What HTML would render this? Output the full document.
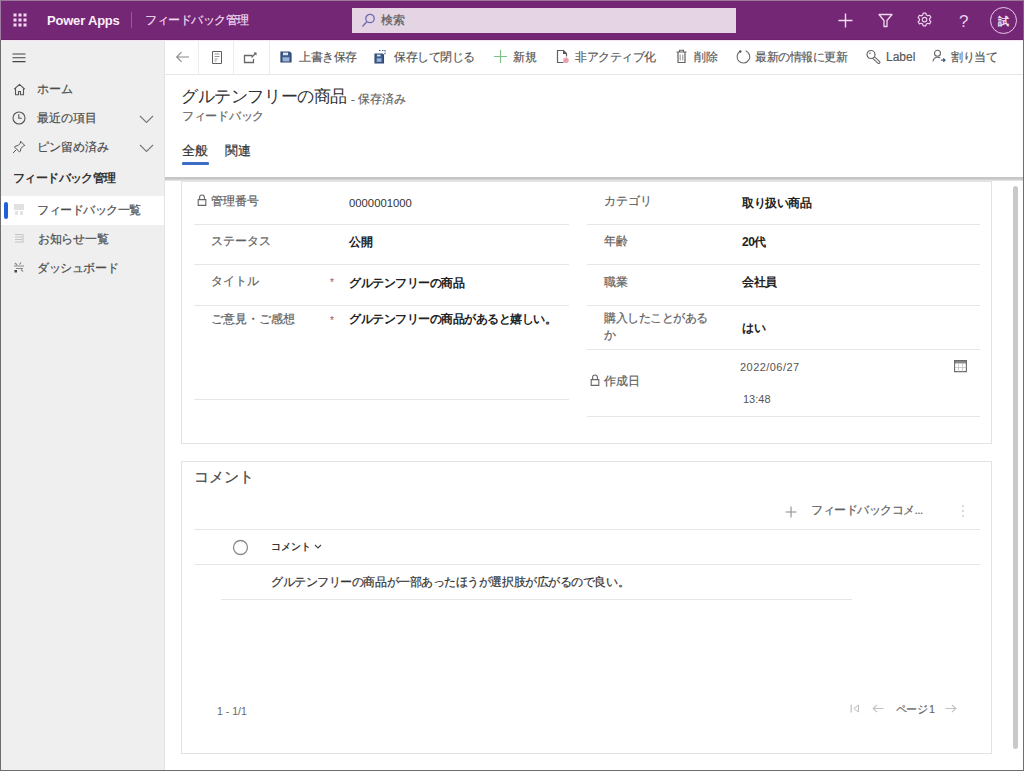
<!DOCTYPE html>
<html><head><meta charset="utf-8">
<style>
*{box-sizing:border-box;margin:0;padding:0}
html,body{width:1024px;height:771px;overflow:hidden;background:#fff}
body{font-family:"Liberation Sans",sans-serif;color:#333;position:relative}
.a{position:absolute;white-space:nowrap;line-height:1}
.sk{-webkit-text-stroke:0.2px currentColor}
#frame{position:absolute;left:0;top:0;width:1024px;height:771px;border:1px solid #6e6e6e;border-top-color:#9a7a9a;z-index:50;pointer-events:none}
#top{position:absolute;left:0;top:0;width:1024px;height:40px;background:#742774}
#nav{position:absolute;left:0;top:40px;width:165px;height:731px;background:#efefef;border-right:1px solid #e3e3e3}
#cmd{position:absolute;left:165px;top:40px;width:859px;height:35px;background:#fff;border-bottom:1px solid #e6e6e6}
#hdr{position:absolute;left:165px;top:75px;width:859px;height:102px;background:#fff}
#shadow{position:absolute;left:165px;top:177px;width:859px;height:4px;background:linear-gradient(#c6c6c6 0,#c6c6c6 2px,#dedede 3px,#e8e8e8 4px)}
#content{position:absolute;left:165px;top:180px;width:859px;height:591px;background:#fff}
.card{position:absolute;background:#fff;border:1px solid #e3e3e3}
.line{position:absolute;height:1px;background:#e6e6e6}
.lbl{color:#606060;font-size:12px;-webkit-text-stroke:0.2px #606060}
.val{color:#222;font-size:12px;font-weight:bold;letter-spacing:-0.5px}
.sep{position:absolute;top:40px;width:1px;height:34px;background:#ececec}
.lbln{font-size:11.6px;color:#4c4c4c;-webkit-text-stroke:0.2px #4c4c4c}
.ct{font-size:12px;color:#555;-webkit-text-stroke:0.15px #555;letter-spacing:-0.45px}
</style></head><body>
<div id="top"></div>
<div id="nav"></div>
<div id="cmd"></div>
<div id="hdr"></div>
<div id="content"></div>
<div id="shadow"></div>

<!-- top bar -->
<svg class="a" style="left:12px;top:12px" width="16" height="16" viewBox="0 0 16 16">
<g fill="#f3d8f3"><rect x="1.5" y="1.5" width="3" height="3"/><rect x="6.5" y="1.5" width="3" height="3"/><rect x="11.5" y="1.5" width="3" height="3"/>
<rect x="1.5" y="6.5" width="3" height="3"/><rect x="6.5" y="6.5" width="3" height="3"/><rect x="11.5" y="6.5" width="3" height="3"/>
<rect x="1.5" y="11.5" width="3" height="3"/><rect x="6.5" y="11.5" width="3" height="3"/><rect x="11.5" y="11.5" width="3" height="3"/></g></svg>
<div class="a" style="left:47px;top:14px;font-size:13px;font-weight:bold;color:#fbeefb;letter-spacing:-0.2px">Power Apps</div>
<div class="a" style="left:131px;top:12px;width:1px;height:16px;background:#9a5a9a"></div>
<div class="a sk" style="left:145px;top:14px;font-size:12px;color:#f1dcf1;letter-spacing:-0.5px">フィードバック管理</div>
<div class="a" style="left:352px;top:8px;width:384px;height:25px;background:#e4d4e4"></div>
<svg class="a" style="left:360px;top:11px" width="16" height="18" viewBox="0 0 16 18"><circle cx="10" cy="7.5" r="4.2" fill="none" stroke="#6b6bb0" stroke-width="1.3"/><line x1="7" y1="10.5" x2="2.5" y2="15.5" stroke="#6b6bb0" stroke-width="1.3"/></svg>
<div class="a sk" style="left:381px;top:14px;font-size:12px;color:#5e5e5e">検索</div>
<!-- right icons -->
<svg class="a" style="left:838px;top:13px" width="15" height="15" viewBox="0 0 15 15"><path d="M7.5 0.5v14M0.5 7.5h14" stroke="#f3e0f3" stroke-width="1.4"/></svg>
<svg class="a" style="left:878px;top:13px" width="15" height="15" viewBox="0 0 15 15"><path d="M1 1.5h13l-5 6v6h-3v-6z" fill="none" stroke="#f0d8f0" stroke-width="1.3" stroke-linejoin="round"/></svg>
<svg class="a" style="left:917px;top:12px" width="15" height="15" viewBox="0 0 15 15"><path d="M6.2 1.2h2.6l.5 1.8 1.5.8 1.8-.6 1.3 2.2-1.3 1.3v1.7l1.3 1.3-1.3 2.2-1.8-.6-1.5.8-.5 1.8H6.2l-.5-1.8-1.5-.8-1.8.6L1.1 9.8l1.3-1.3V6.8L1.1 5.5l1.3-2.2 1.8.6 1.5-.8z" fill="none" stroke="#ecd0ec" stroke-width="1.2" stroke-linejoin="round"/><circle cx="7.5" cy="7.6" r="2.3" fill="none" stroke="#ecd0ec" stroke-width="1.2"/></svg>
<div class="a" style="left:959px;top:13px;font-size:17px;color:#eccfec">?</div>
<div class="a" style="left:990px;top:7px;width:27px;height:27px;border:1.2px solid #ecc8ec;border-radius:50%"></div>
<div class="a" style="left:998px;top:16px;font-size:11px;font-weight:bold;color:#f2e2f2">試</div>

<!-- nav -->
<svg class="a" style="left:12px;top:53px" width="14" height="10" viewBox="0 0 14 10"><path d="M0.5 1h13M0.5 4.8h13M0.5 8.6h13" stroke="#444" stroke-width="1.1"/></svg>
<svg class="a" style="left:13px;top:83px" width="13" height="13" viewBox="0 0 13 13"><path d="M1.2 6.2L6.5 1.3l5.3 4.9M2.5 5v6.8h3v-3.3h2v3.3h3V5" fill="none" stroke="#555" stroke-width="1.1" stroke-linejoin="round"/></svg>
<div class="a lbln" style="left:37px;top:83px">ホーム</div>
<svg class="a" style="left:12px;top:111px" width="14" height="14" viewBox="0 0 14 14"><circle cx="7" cy="7" r="6" fill="none" stroke="#555" stroke-width="1.1"/><path d="M6.8 3.3v4h3" fill="none" stroke="#555" stroke-width="1.1"/></svg>
<div class="a lbln" style="left:37px;top:112px">最近の項目</div>
<svg class="a" style="left:139px;top:115px" width="15" height="9" viewBox="0 0 15 9"><path d="M1 1l6.5 6.5L14 1" fill="none" stroke="#777" stroke-width="1.1"/></svg>
<svg class="a" style="left:12px;top:140px" width="14" height="14" viewBox="0 0 14 14"><path d="M8.5 1.2l4.3 4.3-1.4.6-2.6 2.4-.3 2.6-1 .9-5-5 .9-1 2.6-.3 2.4-2.6zM4.3 9.7L1 13" fill="none" stroke="#555" stroke-width="1" stroke-linejoin="round"/></svg>
<div class="a lbln" style="left:37px;top:141px">ピン留め済み</div>
<svg class="a" style="left:139px;top:144px" width="15" height="9" viewBox="0 0 15 9"><path d="M1 1l6.5 6.5L14 1" fill="none" stroke="#777" stroke-width="1.1"/></svg>
<div class="a" style="left:13px;top:172px;font-size:12px;font-weight:bold;color:#333;letter-spacing:-0.6px">フィードバック管理</div>
<div class="a" style="left:1px;top:196px;width:163px;height:29px;background:#fff"></div>
<div class="a" style="left:4px;top:202px;width:3.5px;height:17px;background:#1d62d6;border-radius:2px"></div>
<svg class="a" style="left:14px;top:204px" width="11" height="11" viewBox="0 0 11 11"><path d="M0 1h10M0 3h10M0 5h10" stroke="#c4c4c4" stroke-width="1.2"/><path d="M1 8h3M6 8h3M1 10h3M6 10h3" stroke="#c8c8c8" stroke-width="1.1"/></svg>
<div class="a lbln" style="left:37px;top:204px;letter-spacing:-0.5px">フィードバック一覧</div>
<svg class="a" style="left:14px;top:233px" width="11" height="11" viewBox="0 0 11 11"><path d="M1 1.5h7M1 4h7M1 6.5h7M1 9h7M9 1v9" stroke="#c4c4c4" stroke-width="1.1"/></svg>
<div class="a lbln" style="left:38px;top:233px;letter-spacing:-0.3px">お知らせ一覧</div>
<svg class="a" style="left:13px;top:261px" width="12" height="12" viewBox="0 0 12 12"><path d="M2 2l2 2M8 1.5l-1.5 2M1 5h10M3 7.5h7M8 8.5l2 2" stroke="#8a8a8a" stroke-width="1.2"/><rect x="1.5" y="9" width="2.5" height="2.5" fill="#444"/></svg>
<div class="a lbln" style="left:37px;top:262px;letter-spacing:-0.4px">ダッシュボード</div>


<!-- command bar -->
<div class="sep" style="left:198px"></div>
<div class="sep" style="left:233px"></div>
<div class="sep" style="left:269px"></div>
<svg class="a" style="left:175px;top:51px" width="15" height="12" viewBox="0 0 15 12"><path d="M14 6H1.8M6.5 1.2L1.7 6l4.8 4.8" fill="none" stroke="#8a8a8a" stroke-width="1.1"/></svg>
<svg class="a" style="left:211px;top:50px" width="12" height="15" viewBox="0 0 12 15"><path d="M1.5 1.5h9v12h-9z" fill="none" stroke="#606060" stroke-width="1"/><path d="M3.5 4h5M3.5 6.5h5M3.5 9h3M3.5 11h2" stroke="#8a8a8a" stroke-width="0.9"/></svg>
<svg class="a" style="left:243px;top:51px" width="15" height="13" viewBox="0 0 15 13"><path d="M9.5 4.5H1.5v7h9V8" fill="none" stroke="#666" stroke-width="1.3"/><path d="M8.5 6.5l4-4" stroke="#666" stroke-width="1.2"/><path d="M10.5 1.5h3v3z" fill="#555"/></svg>
<svg class="a" style="left:280px;top:51px" width="12" height="12" viewBox="0 0 12 12"><path d="M1 1h8.5l1.5 1.5V11H1z" fill="#3e5d8a" stroke="#2e4670" stroke-width="1.2"/><rect x="3" y="1.6" width="5" height="2.6" fill="#dfe7f2"/><rect x="2.6" y="6.3" width="6.8" height="4.1" fill="#9bb3d6"/></svg>
<div class="a ct" style="left:299px;top:51px">上書き保存</div>
<svg class="a" style="left:374px;top:49px" width="13" height="15" viewBox="0 0 13 15"><path d="M1 5h7.5l1 1v8H1z" fill="#3e5d8a" stroke="#2e4670" stroke-width="1.1"/><rect x="2.8" y="9.3" width="4.6" height="3.5" fill="#9bb3d6"/><rect x="3" y="5.6" width="3.5" height="1.8" fill="#dfe7f2"/><path d="M5 1.5h1.5M8 1.5h1.5M11 1v1.5M11 3.8v1.5" stroke="#3e5d8a" stroke-width="1.2"/></svg>
<div class="a ct" style="left:394px;top:51px">保存して閉じる</div>
<svg class="a" style="left:494px;top:50px" width="13" height="13" viewBox="0 0 13 13"><path d="M6.5 0v13M0 6.5h13" stroke="#7cc08a" stroke-width="1.2"/></svg>
<div class="a ct" style="left:513px;top:51px">新規</div>
<svg class="a" style="left:556px;top:49px" width="14" height="15" viewBox="0 0 14 15"><path d="M7.5 13.5H1.5v-12h6l3 3v3" fill="none" stroke="#606060" stroke-width="1.2"/><path d="M7 1.2l3.8 3.8H7z" fill="#555"/><circle cx="10" cy="11.3" r="2.8" fill="#eba6b4"/><path d="M8.8 12.5l2.4-2.4" stroke="#d88"/></svg>
<div class="a ct" style="left:575px;top:51px">非アクティブ化</div>
<svg class="a" style="left:676px;top:49px" width="11" height="15" viewBox="0 0 11 15"><path d="M.5 3h10M3.5 3V1.3h4V3" fill="none" stroke="#606060" stroke-width="1.1"/><path d="M2 3v10.5h7V3" fill="none" stroke="#606060" stroke-width="1.2"/><path d="M4.2 5.5v6M6.8 5.5v6" stroke="#888" stroke-width="0.9"/></svg>
<div class="a ct" style="left:694px;top:51px">削除</div>
<svg class="a" style="left:736px;top:49px" width="15" height="15" viewBox="0 0 15 15"><path d="M4.2 2.3A6.3 6.3 0 1 0 9.6 1.8" fill="none" stroke="#6a6a6a" stroke-width="1.1"/><circle cx="4.3" cy="2.4" r="1.25" fill="#555"/></svg>
<div class="a ct" style="left:755px;top:51px">最新の情報に更新</div>
<svg class="a" style="left:865px;top:49px" width="16" height="16" viewBox="0 0 16 16"><path d="M8.7 8.7l5 4.6" stroke="#666" stroke-width="3.4" stroke-linecap="round"/><path d="M8.7 8.7l5 4.6" stroke="#fff" stroke-width="1.3" stroke-linecap="round"/><circle cx="6" cy="5.5" r="4" fill="#fff" stroke="#666" stroke-width="1.2"/><circle cx="5" cy="4.3" r="0.8" fill="#666"/></svg>
<div class="a ct" style="left:886px;top:51px;letter-spacing:0;color:#555">Label</div>
<svg class="a" style="left:932px;top:49px" width="14" height="14" viewBox="0 0 14 14"><circle cx="5.5" cy="4.3" r="3" fill="none" stroke="#666" stroke-width="1.1"/><path d="M1 12.5c.3-2.5 2.2-4.3 4.5-4.3 1.1 0 2 .3 2.8.9" fill="none" stroke="#666" stroke-width="1.1"/><path d="M9 11.2h4M11.3 9.5l1.7 1.7-1.7 1.7" fill="none" stroke="#3d5a80" stroke-width="1.2"/></svg>
<div class="a ct" style="left:951px;top:51px">割り当て</div>

<!-- header -->
<div class="a" style="left:181px;top:88px;font-size:17px;color:#303030;letter-spacing:-0.4px">グルテンフリーの商品</div>
<div class="a sk" style="left:351px;top:94px;font-size:11.5px;color:#666">- 保存済み</div>
<div class="a sk" style="left:182px;top:111px;font-size:11.5px;color:#666;letter-spacing:-0.3px">フィードバック</div>
<div class="a sk" style="left:182px;top:144px;font-size:13px;color:#333">全般</div>
<div class="a sk" style="left:225px;top:144px;font-size:13px;color:#333">関連</div>
<div class="a" style="left:182px;top:162px;width:27px;height:3px;background:#3a6ec8;border-radius:1px"></div>


<!-- card 1 -->
<div class="card" style="left:181px;top:181px;width:811px;height:263px"></div>
<div class="line" style="left:194px;top:224px;width:375px"></div>
<div class="line" style="left:194px;top:264px;width:375px"></div>
<div class="line" style="left:194px;top:305px;width:375px"></div>
<div class="line" style="left:194px;top:399px;width:375px"></div>
<div class="line" style="left:587px;top:224px;width:393px"></div>
<div class="line" style="left:587px;top:264px;width:393px"></div>
<div class="line" style="left:587px;top:305px;width:393px"></div>
<div class="line" style="left:587px;top:349px;width:393px"></div>
<div class="line" style="left:587px;top:416px;width:393px"></div>
<svg class="a" style="left:197px;top:194px" width="10" height="12" viewBox="0 0 10 12"><path d="M2.6 5.6V3.4a2.4 2.4 0 0 1 4.8 0v2.2M1.2 5.6h7.6v5.8H1.2z" fill="none" stroke="#666" stroke-width="1.1"/></svg>
<div class="a lbl" style="left:211px;top:195px">管理番号</div>
<div class="a" style="left:349px;top:198px;font-size:11.3px;color:#333">0000001000</div>
<div class="a lbl" style="left:211px;top:235px">ステータス</div>
<div class="a val" style="left:349px;top:236px">公開</div>
<div class="a lbl" style="left:211px;top:275px">タイトル</div>
<div class="a" style="left:330px;top:278px;font-size:10px;color:#a85050">*</div>
<div class="a val" style="left:349px;top:277px">グルテンフリーの商品</div>
<div class="a lbl" style="left:211px;top:313px">ご意見・ご感想</div>
<div class="a" style="left:330px;top:316px;font-size:10px;color:#a85050">*</div>
<div class="a val" style="left:349px;top:313px">グルテンフリーの商品があると嬉しい。</div>

<div class="a lbl" style="left:604px;top:195px">カテゴリ</div>
<div class="a val" style="left:742px;top:197px">取り扱い商品</div>
<div class="a lbl" style="left:604px;top:235px">年齢</div>
<div class="a val" style="left:742px;top:236px">20代</div>
<div class="a lbl" style="left:604px;top:276px">職業</div>
<div class="a val" style="left:742px;top:276px">会社員</div>
<div class="a lbl" style="left:604px;top:312px;letter-spacing:-0.45px">購入したことがある</div>
<div class="a lbl" style="left:604px;top:329px">か</div>
<div class="a val" style="left:742px;top:322px">はい</div>
<svg class="a" style="left:590px;top:374px" width="10" height="12" viewBox="0 0 10 12"><path d="M2.6 5.6V3.4a2.4 2.4 0 0 1 4.8 0v2.2M1.2 5.6h7.6v5.8H1.2z" fill="none" stroke="#666" stroke-width="1.1"/></svg>
<div class="a lbl" style="left:604px;top:375px">作成日</div>
<div class="a" style="left:740px;top:362px;font-size:11px;color:#555;letter-spacing:0.45px">2022/06/27</div>
<div class="a" style="left:743px;top:394px;font-size:11px;color:#555">13:48</div>
<svg class="a" style="left:954px;top:360px" width="14" height="13" viewBox="0 0 14 13"><rect x="0" y="0" width="13" height="3.5" fill="#8c8c8c"/><path d="M.6.6h11.8v11H.6z" fill="none" stroke="#6a6a6a" stroke-width="1.1"/><path d="M4.5 3.5v8M8.5 3.5v8M1 7.5h11" stroke="#c8c8c8" stroke-width="0.9"/></svg>

<!-- card 2 -->
<div class="card" style="left:181px;top:461px;width:811px;height:293px"></div>
<div class="a sk" style="left:194px;top:470px;font-size:14.5px;color:#444">コメント</div>
<svg class="a" style="left:785px;top:506px" width="12" height="12" viewBox="0 0 12 12"><path d="M6 .5v11M.5 6h11" stroke="#8c8c8c" stroke-width="1.1"/></svg>
<div class="a sk" style="left:811px;top:505px;font-size:11.5px;color:#606060;letter-spacing:-0.5px">フィードバックコメ...</div>
<svg class="a" style="left:961px;top:504px" width="4" height="14" viewBox="0 0 4 14"><circle cx="2" cy="2" r="0.8" fill="#aaa"/><circle cx="2" cy="7" r="0.8" fill="#aaa"/><circle cx="2" cy="12" r="0.8" fill="#aaa"/></svg>
<div class="line" style="left:194px;top:529px;width:786px"></div>
<svg class="a" style="left:232px;top:539px" width="17" height="17" viewBox="0 0 17 17"><circle cx="8.5" cy="8.5" r="7" fill="none" stroke="#8a8a8a" stroke-width="1.3"/></svg>
<div class="a" style="left:271px;top:542px;font-size:10px;font-weight:bold;color:#383838">コメント</div>
<svg class="a" style="left:314px;top:544px" width="8" height="6" viewBox="0 0 8 6"><path d="M1 1l3 3 3-3" fill="none" stroke="#444" stroke-width="1.1"/></svg>
<div class="line" style="left:194px;top:564px;width:786px"></div>
<div class="a sk" style="left:271px;top:576px;font-size:12px;color:#333;letter-spacing:-0.45px">グルテンフリーの商品が一部あったほうが選択肢が広がるので良い。</div>
<div class="line" style="left:221px;top:599px;width:631px"></div>
<div class="a" style="left:217px;top:706px;font-size:10.5px;color:#666">1 - 1/1</div>
<svg class="a" style="left:850px;top:704px" width="10" height="9" viewBox="0 0 10 9"><path d="M1.2 .5v8" stroke="#c4c4c4" stroke-width="1.3"/><path d="M8.5 1L3.8 4.5 8.5 8z" fill="none" stroke="#bdbdbd" stroke-width="1"/></svg>
<svg class="a" style="left:872px;top:704px" width="12" height="9" viewBox="0 0 12 9"><path d="M11.5 4.5H1.2M5 .8L1.2 4.5 5 8.2" fill="none" stroke="#c0c0c0" stroke-width="1.1"/></svg>
<div class="a sk" style="left:896px;top:704px;font-size:11px;color:#666;letter-spacing:-0.6px">ページ<span style="margin-left:2px;font-size:10px">1</span></div>
<svg class="a" style="left:945px;top:704px" width="12" height="9" viewBox="0 0 12 9"><path d="M.5 4.5h10.3M7 .8l3.8 3.7L7 8.2" fill="none" stroke="#c0c0c0" stroke-width="1.1"/></svg>

<!-- scrollbar -->
<div class="a" style="left:1013px;top:186px;width:5px;height:563px;background:#c9c9c9;border-radius:3px"></div>

<div class="a" style="left:0;top:39px;width:1024px;height:1px;background:#6a236c"></div>
<div class="a" style="left:0;top:40px;width:1024px;height:1px;background:#f2e6f2"></div>
<div class="a" style="left:0;top:0;width:1px;height:40px;background:#a07aa0;z-index:60"></div>
<div id="frame"></div>
</body></html>
